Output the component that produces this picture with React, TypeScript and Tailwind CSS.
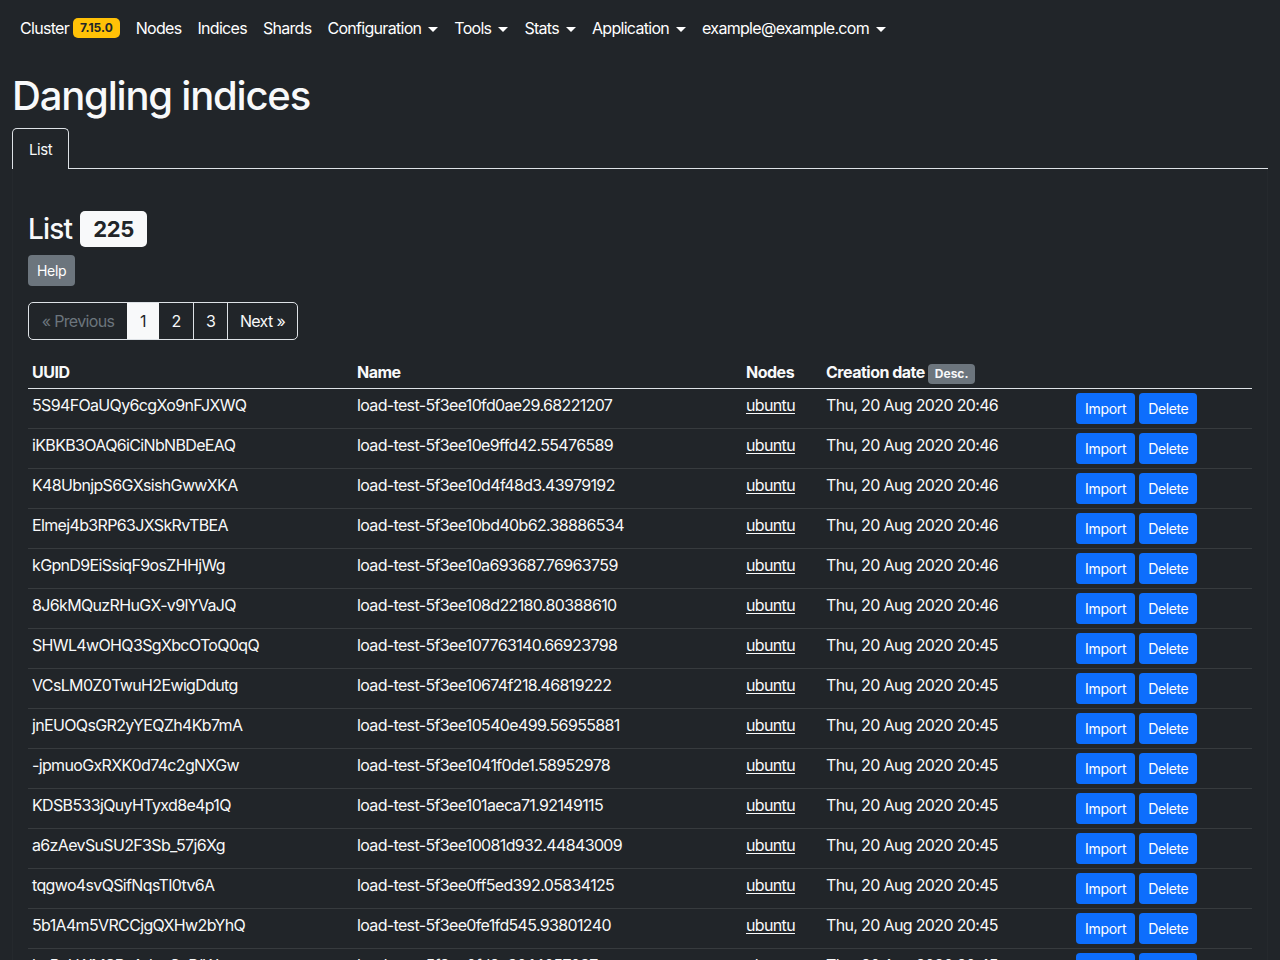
import React from 'react';

const rows = [
  ['5S94FOaUQy6cgXo9nFJXWQ', 'load-test-5f3ee10fd0ae29.68221207', 'Thu, 20 Aug 2020 20:46'],
  ['iKBKB3OAQ6iCiNbNBDeEAQ', 'load-test-5f3ee10e9ffd42.55476589', 'Thu, 20 Aug 2020 20:46'],
  ['K48UbnjpS6GXsishGwwXKA', 'load-test-5f3ee10d4f48d3.43979192', 'Thu, 20 Aug 2020 20:46'],
  ['Elmej4b3RP63JXSkRvTBEA', 'load-test-5f3ee10bd40b62.38886534', 'Thu, 20 Aug 2020 20:46'],
  ['kGpnD9EiSsiqF9osZHHjWg', 'load-test-5f3ee10a693687.76963759', 'Thu, 20 Aug 2020 20:46'],
  ['8J6kMQuzRHuGX-v9lYVaJQ', 'load-test-5f3ee108d22180.80388610', 'Thu, 20 Aug 2020 20:46'],
  ['SHWL4wOHQ3SgXbcOToQ0qQ', 'load-test-5f3ee107763140.66923798', 'Thu, 20 Aug 2020 20:45'],
  ['VCsLM0Z0TwuH2EwigDdutg', 'load-test-5f3ee10674f218.46819222', 'Thu, 20 Aug 2020 20:45'],
  ['jnEUOQsGR2yYEQZh4Kb7mA', 'load-test-5f3ee10540e499.56955881', 'Thu, 20 Aug 2020 20:45'],
  ['-jpmuoGxRXK0d74c2gNXGw', 'load-test-5f3ee1041f0de1.58952978', 'Thu, 20 Aug 2020 20:45'],
  ['KDSB533jQuyHTyxd8e4p1Q', 'load-test-5f3ee101aeca71.92149115', 'Thu, 20 Aug 2020 20:45'],
  ['a6zAevSuSU2F3Sb_57j6Xg', 'load-test-5f3ee10081d932.44843009', 'Thu, 20 Aug 2020 20:45'],
  ['tqgwo4svQSifNqsTI0tv6A', 'load-test-5f3ee0ff5ed392.05834125', 'Thu, 20 Aug 2020 20:45'],
  ['5b1A4m5VRCCjgQXHw2bYhQ', 'load-test-5f3ee0fe1fd545.93801240', 'Thu, 20 Aug 2020 20:45'],
  ['bcBaLWMSRzAdsoGzDIWg', 'load-test-5f3ee0fd2e30.14057037', 'Thu, 20 Aug 2020 20:45'],
];

const Caret = () => (
  <span className="ml-[7px] inline-block align-middle border-x-[5px] border-t-[5px] border-x-transparent border-t-white" />
);

const Navbar = () => (
  <nav className="flex h-14 items-center px-5 text-base tracking-[-0.7px] text-white">
    <span>Cluster</span>
    <span className="ml-1 rounded-[5px] bg-[#ffc107] px-[7px] py-[2px] text-[12px] font-bold leading-[16px] tracking-normal text-[#212529]">7.15.0</span>
    <span className="ml-4">Nodes</span>
    <span className="ml-4">Indices</span>
    <span className="ml-4">Shards</span>
    <span className="ml-4">Configuration<Caret /></span>
    <span className="ml-4">Tools<Caret /></span>
    <span className="ml-4">Stats<Caret /></span>
    <span className="ml-4">Application<Caret /></span>
    <span className="ml-4">example@example.com<Caret /></span>
  </nav>
);

const App = () => {
  return (
    <div className="min-h-screen bg-[#212529] text-[#f8f9fa]" style={{ fontFamily: 'Inter, "Liberation Sans", sans-serif' }}>
      <Navbar />
      <main className="px-3">
        <h1 className="mt-4 mb-[8px] text-[40px] font-medium leading-[48px] tracking-[-1.2px]">Dangling indices</h1>
        <div className="flex border-b border-[#dee2e6]">
          <div className="-mb-px h-[41px] rounded-t-[5px] border border-b-0 border-[#dee2e6] bg-[#212529] px-4 pt-[10px] text-[15px] tracking-[-0.4px]">List</div>
        </div>
        <section className="border-x border-[#25292d] px-[15px] pt-[42px] tracking-[-0.65px]">
          <div className="flex items-center">
            <h3 className="text-[28px] font-medium leading-[34px] tracking-[-0.8px]">List</h3>
            <span className="ml-2 rounded-[5px] bg-[#f8f9fa] px-[13px] py-[3px] text-[22px] font-bold leading-[30px] tracking-[-0.4px] text-[#212529]">225</span>
          </div>
          <button className="mt-2 rounded-[4px] bg-[#6c757d] px-[9px] py-[5px] text-[14px] leading-[21px] tracking-[-0.3px] text-white">Help</button>
          <div className="mt-4 flex w-fit rounded-[5px] border border-[#dee2e6] text-base">
            <span className="flex h-9 w-[98px] items-center justify-center text-[#6c757d]">« Previous</span>
            <span className="flex h-9 w-[32px] items-center justify-center bg-[#f8f9fa] text-[#212529]">1</span>
            <span className="flex h-9 w-[34px] items-center justify-center">2</span>
            <span className="flex h-9 w-[34px] items-center justify-center border-l border-[#dee2e6]">3</span>
            <span className="flex h-9 w-[70px] items-center justify-center border-l border-[#dee2e6]">Next »</span>
          </div>
          <table className="mt-4 w-full table-fixed border-collapse text-base">
            <colgroup>
              <col className="w-[325px]" />
              <col className="w-[389px]" />
              <col className="w-[80px]" />
              <col className="w-[250px]" />
              <col />
            </colgroup>
            <thead>
              <tr className="border-b border-[#dee2e6] align-bottom">
                <th className="px-1 py-1 text-left font-bold leading-6 tracking-[-0.5px]">UUID</th>
                <th className="px-1 py-1 text-left font-bold leading-6 tracking-[-0.5px]">Name</th>
                <th className="px-1 py-1 text-left font-bold leading-6 tracking-[-0.5px]">Nodes</th>
                <th className="px-1 py-1 text-left font-bold leading-6 tracking-[-0.5px]">
                  Creation date
                  <span className="ml-[3px] inline-block rounded-[4px] bg-[#6c757d] px-[7px] py-[1px] align-middle text-[12px] font-bold leading-[18px] tracking-normal">Desc.</span>
                </th>
                <th className="px-1 py-1" />
              </tr>
            </thead>
            <tbody>
              {rows.map(([uuid, name, date]) => (
                <tr key={uuid} className="border-b border-[#373b3e] align-top">
                  <td className="px-1 py-1 leading-6">{uuid}</td>
                  <td className="px-1 py-1 leading-6">{name}</td>
                  <td className="px-1 py-1 leading-6"><span className="underline underline-offset-2">ubuntu</span></td>
                  <td className="px-1 py-1 leading-6">{date}</td>
                  <td className="px-1 py-1">
                    <div className="flex gap-1">
                      <button className="h-[31px] rounded-[4px] bg-[#0d6efd] px-[9px] text-[14px] tracking-[-0.3px] text-white">Import</button>
                      <button className="h-[31px] rounded-[4px] bg-[#0d6efd] px-[9px] text-[14px] tracking-[-0.4px] text-white">Delete</button>
                    </div>
                  </td>
                </tr>
              ))}
            </tbody>
          </table>
        </section>
      </main>
    </div>
  );
};

export default App;
